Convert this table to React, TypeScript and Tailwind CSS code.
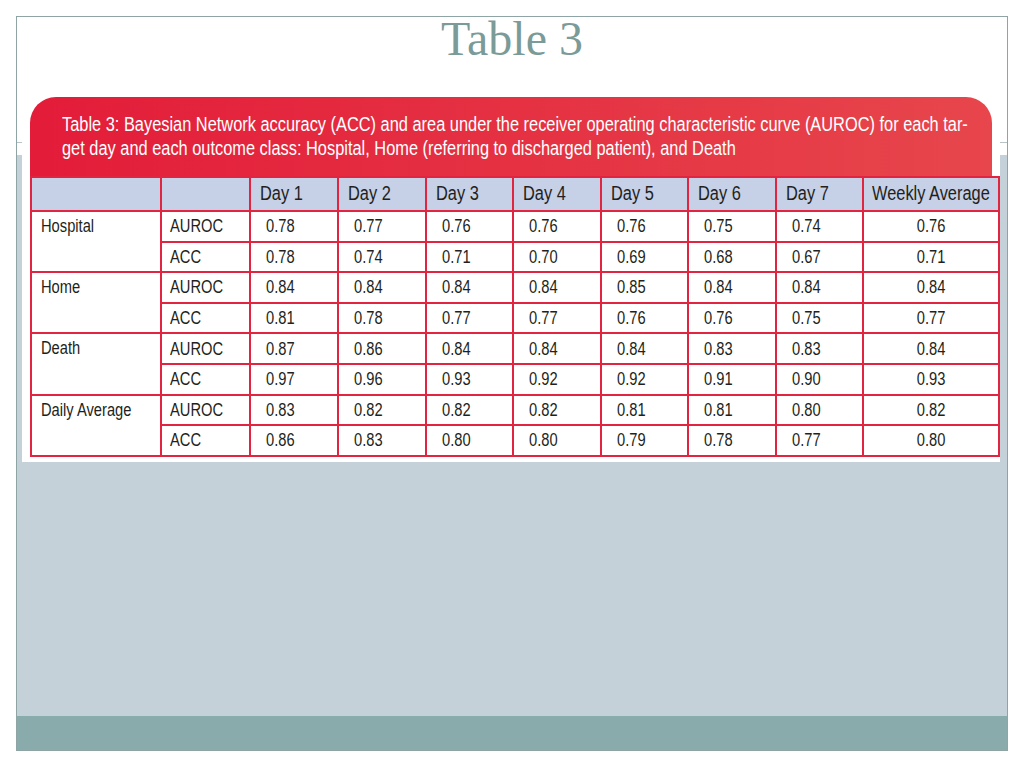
import React from "react";

type Row = {
  group: string;
  metric: string;
  days: string[];
  weekly: string;
};

const rows: Row[] = [
  { group: "Hospital", metric: "AUROC", days: ["0.78", "0.77", "0.76", "0.76", "0.76", "0.75", "0.74"], weekly: "0.76" },
  { group: "", metric: "ACC", days: ["0.78", "0.74", "0.71", "0.70", "0.69", "0.68", "0.67"], weekly: "0.71" },
  { group: "Home", metric: "AUROC", days: ["0.84", "0.84", "0.84", "0.84", "0.85", "0.84", "0.84"], weekly: "0.84" },
  { group: "", metric: "ACC", days: ["0.81", "0.78", "0.77", "0.77", "0.76", "0.76", "0.75"], weekly: "0.77" },
  { group: "Death", metric: "AUROC", days: ["0.87", "0.86", "0.84", "0.84", "0.84", "0.83", "0.83"], weekly: "0.84" },
  { group: "", metric: "ACC", days: ["0.97", "0.96", "0.93", "0.92", "0.92", "0.91", "0.90"], weekly: "0.93" },
  { group: "Daily Average", metric: "AUROC", days: ["0.83", "0.82", "0.82", "0.82", "0.81", "0.81", "0.80"], weekly: "0.82" },
  { group: "", metric: "ACC", days: ["0.86", "0.83", "0.80", "0.80", "0.79", "0.78", "0.77"], weekly: "0.80" },
];

const days = ["Day 1", "Day 2", "Day 3", "Day 4", "Day 5", "Day 6", "Day 7"];
const dayWidths = ["w-[88px]", "w-[88px]", "w-[87px]", "w-[88px]", "w-[87px]", "w-[88px]", "w-[87px]"];

const border = "border-2 border-[#e1243f]";
const cell = `${border} p-0 h-[30.6px] align-middle whitespace-nowrap`;

// condensed look: Arial metrics squeezed horizontally
function Narrow({ children, center }: { children: React.ReactNode; center?: boolean }) {
  return (
    <span className={`inline-block whitespace-nowrap ${center ? "origin-center" : "origin-left"} scale-x-[0.84]`}>
      {children}
    </span>
  );
}

export default function App() {
  return (
    <div className="h-[768px] w-[1024px] bg-white pl-4 pt-4">
      <div className="flex h-[735px] w-[992px] flex-col border border-[#8fa5a5] bg-[linear-gradient(to_bottom,#ffffff_0px,#ffffff_125px,#b9c3c6_125px,#b9c3c6_126px,#ffffff_126px,#ffffff_138px,#c5d1d8_138px,#c5d1d8_699px,#8aabab_699px)]">
        <h1 className="h-[78px] text-center font-['Liberation_Serif',serif] text-[48px] leading-[44px] text-[#7b9b98]">
          Table 3
        </h1>

        <div className="ml-[5px] w-[978px] bg-white px-2 pb-[5px] pt-[2px] font-['Liberation_Sans',Arial,sans-serif]">
          <div className="rounded-t-[26px] bg-[linear-gradient(to_right,#e31c39,#e7464c)]">
            <div className="flex flex-col px-8 pb-[16px] pt-[15px] text-[19.5px] leading-[24px] text-white">
              <span className="inline-block origin-left scale-x-[0.84] whitespace-nowrap">
                Table 3: Bayesian Network accuracy (ACC) and area under the receiver operating characteristic curve (AUROC) for each tar-
              </span>
              <span className="inline-block origin-left scale-x-[0.84] whitespace-nowrap">
                get day and each outcome class: Hospital, Home (referring to discharged patient), and Death
              </span>
            </div>
            <table className="w-[968px] table-fixed border-collapse bg-white text-[#231f20]">
              <thead>
                <tr className="h-[34px] bg-[#c6d0e6] text-[19.5px]">
                  <th className={`w-[130px] ${border} p-0`} />
                  <th className={`w-[89px] ${border} p-0`} />
                  {days.map((d, i) => (
                    <th key={d} className={`${dayWidths[i]} ${border} pl-[9px] text-left font-normal whitespace-nowrap`}>
                      <Narrow>{d}</Narrow>
                    </th>
                  ))}
                  <th className={`w-[136px] ${border} pl-[8px] text-left font-normal whitespace-nowrap`}>
                    <Narrow>Weekly Average</Narrow>
                  </th>
                </tr>
              </thead>
              <tbody className="text-[17.5px]">
                {rows.map((r, i) => (
                  <tr key={i}>
                    {r.group && (
                      <td rowSpan={2} className={`${border} pl-[9px] pt-[4px] align-top leading-[20px] whitespace-nowrap`}>
                        <Narrow>{r.group}</Narrow>
                      </td>
                    )}
                    <td className={`${cell} pl-[8px]`}>
                      <Narrow>{r.metric}</Narrow>
                    </td>
                    {r.days.map((v, j) => (
                      <td key={j} className={`${cell} pl-[15px]`}>
                        <Narrow>{v}</Narrow>
                      </td>
                    ))}
                    <td className={`${cell} text-center`}>
                      <Narrow center>{r.weekly}</Narrow>
                    </td>
                  </tr>
                ))}
              </tbody>
            </table>
          </div>
        </div>
      </div>
    </div>
  );
}
